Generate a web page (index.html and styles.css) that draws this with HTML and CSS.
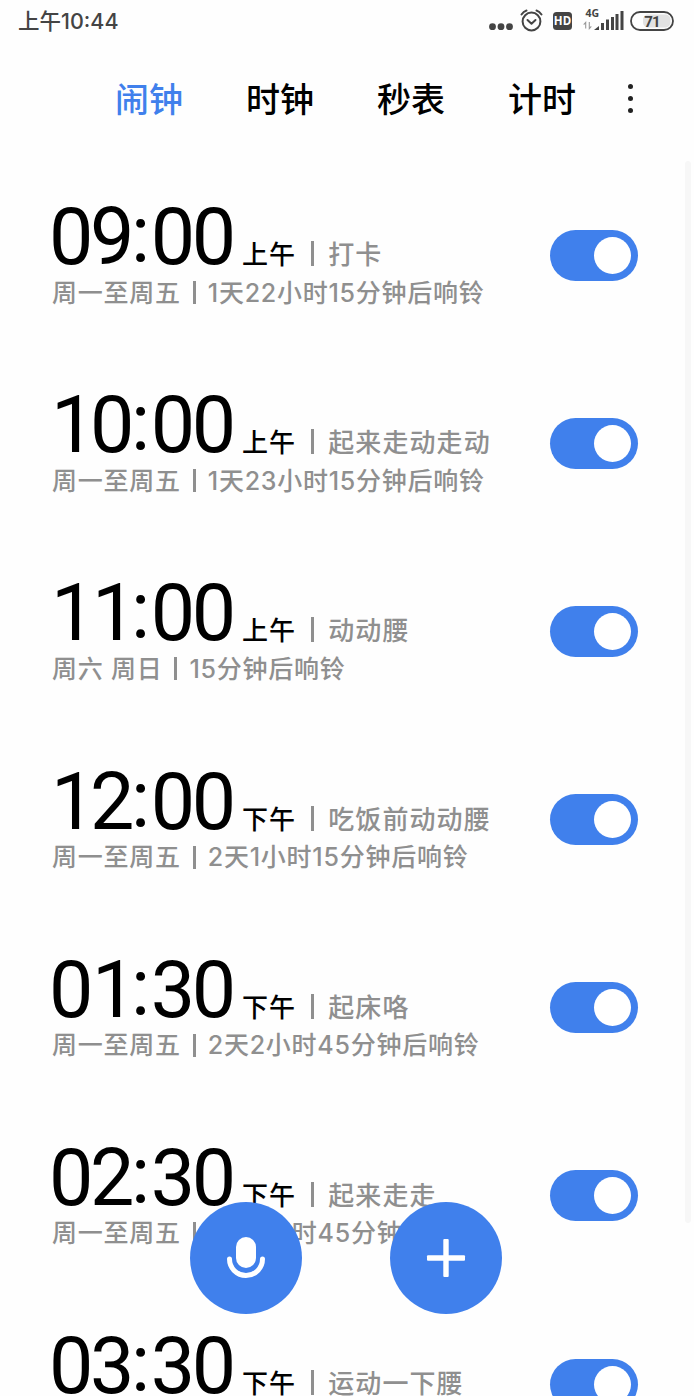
FILE: index.html
```
<!DOCTYPE html>
<html lang="zh-CN">
<head>
    <meta charset="UTF-8">
    <meta name="viewport" content="width=device-width, initial-scale=1.0">
    <title>闹钟</title>
    <link rel="stylesheet" href="styles.css">
</head>
<body>
    <header class="status-bar">
        <span class="status-time">上午10:44</span>
        <svg class="status-icons" width="190" height="36" viewBox="0 0 190 36">
            <g fill="#444">
                <circle cx="8.5" cy="26.7" r="3.4"/>
                <circle cx="17" cy="26.7" r="3.4"/>
                <circle cx="25.5" cy="26.7" r="3.4"/>
            </g>
            <g fill="none" stroke="#444" stroke-width="2" stroke-linecap="round" stroke-linejoin="round">
                <circle cx="47.5" cy="21.5" r="8.9"/>
                <path d="M43.5 20l4 3.7 4-3.7M37.5 14.5q2-3 5-4M57.5 14.5q-2-3-5-4"/>
            </g>
            <rect x="69" y="12" width="19" height="18" rx="3.5" fill="#444"/>
            <text class="hd-text" x="78.5" y="25.3" text-anchor="middle">HD</text>
            <text class="net-text" x="101.5" y="17.3">4G</text>
            <path d="M101.7 28.5v-6l-2 2.2M105.3 22v6.5l2-2.2" fill="none" stroke="#999" stroke-width="1.1"/>
            <path d="M110 30l5-4v4zM117 23h3v7h-3zM122 19.5h3V30h-3zM127 17h3v13h-3zM131.5 14h3v16h-3zM136.5 11h3v19h-3z" fill="#444"/>
            <rect x="159" y="14.5" width="27.5" height="13" rx="5" fill="#e2e2e2"/>
            <rect x="147" y="12" width="42" height="18" rx="9" fill="none" stroke="#444" stroke-width="1.8"/>
            <text class="battery-text" x="168" y="26.6" text-anchor="middle">71</text>
        </svg>
    </header>

    <nav class="tabs">
        <a class="tab active">闹钟</a>
        <a class="tab">时钟</a>
        <a class="tab">秒表</a>
        <a class="tab">计时</a>
        <span class="more"><i></i><i></i><i></i></span>
    </nav>

    <main class="alarm-list">
        <section class="alarm">
            <div class="info">
                <div class="headline"><span class="time">09<b>:</b>00</span><span class="period">上午</span><i class="bar"></i><span class="note">打卡</span></div>
                <div class="detail"><span>周一至周五</span><i class="bar"></i><span>1天22小时15分钟后响铃</span></div>
            </div>
            <span class="switch"></span>
        </section>
        <section class="alarm">
            <div class="info">
                <div class="headline"><span class="time"><i>1</i>0<b>:</b>00</span><span class="period">上午</span><i class="bar"></i><span class="note">起来走动走动</span></div>
                <div class="detail"><span>周一至周五</span><i class="bar"></i><span>1天23小时15分钟后响铃</span></div>
            </div>
            <span class="switch"></span>
        </section>
        <section class="alarm">
            <div class="info">
                <div class="headline"><span class="time"><i>11</i><b>:</b>00</span><span class="period">上午</span><i class="bar"></i><span class="note">动动腰</span></div>
                <div class="detail"><span>周六 周日</span><i class="bar"></i><span>15分钟后响铃</span></div>
            </div>
            <span class="switch"></span>
        </section>
        <section class="alarm">
            <div class="info">
                <div class="headline"><span class="time"><i>1</i>2<b>:</b>00</span><span class="period">下午</span><i class="bar"></i><span class="note">吃饭前动动腰</span></div>
                <div class="detail"><span>周一至周五</span><i class="bar"></i><span>2天1小时15分钟后响铃</span></div>
            </div>
            <span class="switch"></span>
        </section>
        <section class="alarm">
            <div class="info">
                <div class="headline"><span class="time">0<i>1</i><b>:</b>30</span><span class="period">下午</span><i class="bar"></i><span class="note">起床咯</span></div>
                <div class="detail"><span>周一至周五</span><i class="bar"></i><span>2天2小时45分钟后响铃</span></div>
            </div>
            <span class="switch"></span>
        </section>
        <section class="alarm">
            <div class="info">
                <div class="headline"><span class="time">02<b>:</b>30</span><span class="period">下午</span><i class="bar"></i><span class="note">起来走走</span></div>
                <div class="detail"><span>周一至周五</span><i class="bar"></i><span>2天3小时45分钟后响铃</span></div>
            </div>
            <span class="switch"></span>
        </section>
        <section class="alarm">
            <div class="info">
                <div class="headline"><span class="time">03<b>:</b>30</span><span class="period">下午</span><i class="bar"></i><span class="note">运动一下腰</span></div>
            </div>
            <span class="switch"></span>
        </section>
    </main>

    <div class="scrollbar"></div>

    <div class="actions">
        <button class="fab" aria-label="语音">
            <svg width="112" height="112" viewBox="0 0 112 112">
                <rect x="46" y="35" width="20" height="31" rx="10" fill="#fff"/>
                <path d="M39.5 57a16.5 16.5 0 0 0 33 0" fill="none" stroke="#fff" stroke-width="5" stroke-linecap="round"/>
            </svg>
        </button>
        <button class="fab" aria-label="添加">
            <svg width="112" height="112" viewBox="0 0 112 112">
                <rect x="37" y="53.3" width="38" height="5.4" rx="1" fill="#fff"/>
                <rect x="53.3" y="37" width="5.4" height="38" rx="1" fill="#fff"/>
            </svg>
        </button>
    </div>
</body>
</html>
```
FILE: styles.css
```
:root {
    --blue: #4080ec;
    --gray: #8f8f8f;
}

* {
    box-sizing: border-box;
}

body {
    margin: 0;
    height: 1396px;
    overflow: hidden;
    position: relative;
    background: #fefefe;
    color: #000;
    font-family: Inter, "Noto Sans CJK SC", sans-serif;
    font-weight: 500;
}

.status-bar {
    display: flex;
    justify-content: space-between;
    height: 42px;
    padding: 0 20px 0 18px;
    color: #444;
}

.status-time {
    font-size: 21.5px;
    line-height: 42px;
}

.hd-text,
.net-text,
.battery-text {
    font-family: "Open Sans", sans-serif;
    font-weight: 700;
    fill: #444;
}

.hd-text {
    font-size: 11.5px;
    fill: #fff;
}

.net-text {
    font-size: 10.5px;
}

.battery-text {
    font-family: Roboto, sans-serif;
    font-size: 15px;
    letter-spacing: -0.8px;
}

.tabs {
    display: flex;
    align-items: center;
    height: 112px;
    padding-left: 115px;
}

.tab {
    width: 131px;
    padding-top: 3px;
    font-size: 34px;
    line-height: 50px;
}

.tab.active {
    color: var(--blue);
}

.more {
    display: flex;
    flex-direction: column;
    gap: 7px;
    margin-left: -11px;
}

.more i {
    width: 5px;
    height: 5px;
    border-radius: 50%;
    background: #222;
}

.alarm-list {
    height: 1242px;
    overflow: hidden;
    padding: 36px 56px 0 52px;
}

.alarm {
    display: flex;
    justify-content: space-between;
    height: 188.2px;
}

.headline {
    display: flex;
    align-items: baseline;
    height: 82px;
    line-height: 94px;
    white-space: nowrap;
}

.time {
    width: 193px;
    margin-left: -3px;
    font-family: Roboto, sans-serif;
    font-size: 79px;
    font-weight: 400;
    letter-spacing: -3.4px;
}

.time b {
    position: relative;
    top: -2px;
    font-weight: 400;
    letter-spacing: 0.6px;
}

/* the narrow "1" sits a little to the right in its cell */
.time i {
    position: relative;
    left: 2px;
    font-style: normal;
}

.period,
.note {
    font-size: 26px;
    letter-spacing: 1.1px;
}

.note,
.detail {
    color: var(--gray);
}

.bar {
    width: 3px;
    height: 25px;
    background: var(--gray);
}

.headline .bar {
    align-self: flex-end;
    margin: 0 14px 0 15px;
    position: relative;
    top: -6px;
}

.detail {
    display: flex;
    align-items: center;
    height: 41px;
    font-size: 25px;
    line-height: 38px;
    letter-spacing: 0.75px;
    white-space: nowrap;
}

.detail .bar {
    height: 23px;
    margin: 0 12px;
}

.switch {
    width: 88px;
    height: 51px;
    margin-top: 39.5px;
    padding: 7px;
    border-radius: 26px;
    background: var(--blue);
}

.switch::after {
    content: "";
    display: block;
    width: 37px;
    height: 37px;
    margin-left: auto;
    border-radius: 50%;
    background: #fff;
}

.scrollbar {
    position: absolute;
    top: 161px;
    right: 3px;
    width: 6px;
    height: 1062px;
    border-radius: 3px;
    background: #f7f7f7;
}

/* floating buttons over the list */
.actions {
    position: absolute;
    top: 1202px;
    left: 190px;
    display: flex;
    gap: 88px;
}

.fab {
    width: 112px;
    height: 112px;
    padding: 0;
    border: none;
    border-radius: 50%;
    background: var(--blue);
    cursor: pointer;
}

.fab svg {
    display: block;
}
```
